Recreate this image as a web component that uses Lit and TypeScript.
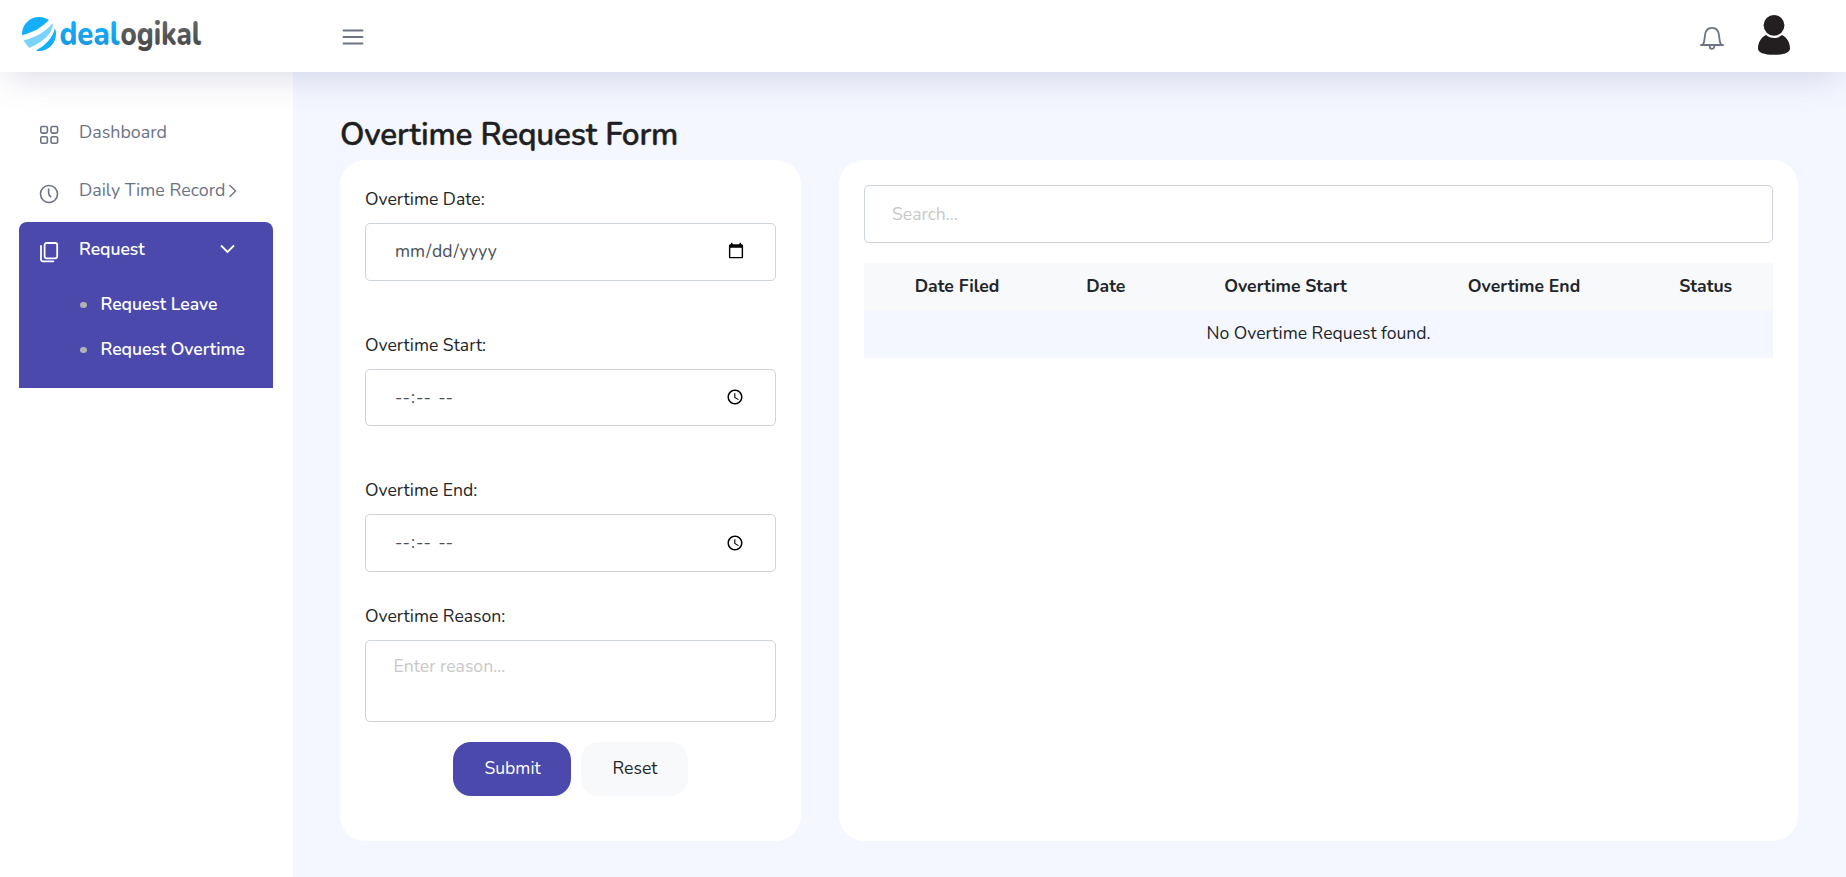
import { LitElement, html, css, svg } from "lit";
import { customElement } from "lit/decorators.js";

const gridIcon = html`<svg class="ico" width="20" height="20" viewBox="0 0 20 20">
  ${[[1.8, 1.5], [12, 1.5], [1.8, 11.7], [12, 11.7]].map(
    ([x, y]) => svg`<rect x=${x} y=${y} width="6.6" height="6.6" rx="1.6"></rect>`
  )}
</svg>`;

const clockIcon = html`<svg class="ico" width="20" height="20" viewBox="0 0 20 20">
  <circle cx="10" cy="10" r="8.5"></circle>
  <path d="M9.6 4.6v4.2c0 2 .9 3.2 2.6 4.2"></path>
</svg>`;

const copyIcon = html`<svg class="ico copy" width="20" height="22" viewBox="0 0 20 22">
  <rect x="5.6" y="2" width="12.6" height="15.3" rx="2"></rect>
  <path d="M2 4.8v13.4c0 1.3.8 2.1 2.1 2.1h10.2"></path>
</svg>`;

@customElement("app-header")
class AppHeader extends LitElement {
  static styles = css`
    :host { display: block; }
    .bar {
      height: 72px; box-sizing: border-box; display: flex; align-items: center;
      background: #fff; padding: 0 55px 0 22px;
      box-shadow: 0 10px 36px -8px rgba(100, 102, 155, .28);
    }
    .brand { width: 320px; display: flex; align-items: center; }
    .menu { display: block; margin-top: 2px; }
    .right { margin-left: auto; display: flex; align-items: center; gap: 32px; }
    .word { font: 800 33.5px "Nunito", sans-serif; }
    svg { display: block; }
    .bell { margin-top: 3px; }
    .avatar { margin-bottom: 2px; }
  `;
  render() {
    return html`<header class="bar">
      <div class="brand">
        <svg width="200" height="60" viewBox="0 0 200 60">
          <defs>
            <linearGradient id="blue" x1="0" y1="0" x2="0" y2="1">
              <stop offset=".3" stop-color="#14aefa"></stop>
              <stop offset=".85" stop-color="#1a93de"></stop>
            </linearGradient>
            <linearGradient id="gray" x1="0" y1="0" x2="0" y2="1">
              <stop offset=".3" stop-color="#626366"></stop>
              <stop offset=".85" stop-color="#464646"></stop>
            </linearGradient>
            <clipPath id="globe"><circle cx="17" cy="28" r="17"></circle></clipPath>
          </defs>
          <g clip-path="url(#globe)">
            <path fill="#14aefa" d="M-1 29.5C11 26.5 20 21.5 27.5 13.5L24 8H-1z"></path>
            <path fill="#7bd3fc" d="M1.5 34.5C15 31 25 24.5 31 16.5C31 28 21 36 7 42z"></path>
            <path fill="#14aefa" d="M14 44.5C24 39 31.5 31 33 21.5L36 25V46H14z"></path>
          </g>
          <text class="word" x="37.5" y="38.5" textLength="60" lengthAdjust="spacingAndGlyphs" fill="url(#blue)">deal</text>
          <text class="word" x="98.5" y="38.5" textLength="80.5" lengthAdjust="spacingAndGlyphs" fill="url(#gray)">ogikal</text>
        </svg>
      </div>
      <svg class="menu" width="22" height="18" viewBox="0 0 22 18" stroke="#6c7383" stroke-width="1.9" stroke-linecap="round">
        <path d="M1.5 2.5h19M1.5 9h19M1.5 15.5h19"></path>
      </svg>
      <div class="right">
        <svg class="bell" width="26" height="26" viewBox="0 0 26 26" fill="none" stroke="#6c7383" stroke-width="1.8">
          <path d="M1.3 20H24.7M4 19.7C5.5 17 5.6 14.5 5.8 11.5C6.1 6.3 8.6 2.9 13 2.9S19.9 6.3 20.2 11.5C20.4 14.5 20.5 17 22 19.7"></path>
          <path d="M10.7 20.2v1.3a2.3 2.3 0 0 0 4.6 0v-1.3"></path>
        </svg>
        <svg class="avatar" width="34" height="44" viewBox="0 0 34 44" fill="#231f20">
          <circle cx="17" cy="12.3" r="10.4"></circle>
          <path d="M9 22C13.5 25.9 20.5 25.9 25 22C30 24.5 33 29.5 33 35.5C33 39.5 27 41.8 17 41.8S1 39.5 1 35.5C1 29.5 4 24.5 9 22z"></path>
        </svg>
      </div>
    </header>`;
  }
}

@customElement("app-sidebar")
class AppSidebar extends LitElement {
  static styles = css`
    :host { display: block; }
    .nav {
      height: 100%; box-sizing: border-box; padding: 33px 20px 0 19px; background: #fff;
      display: flex; flex-direction: column; gap: 4.5px; color: #6c7383;
      font: 400 17.85px/24px "Nunito", sans-serif;
    }
    .row { height: 54px; display: flex; align-items: center; padding-left: 20px; white-space: nowrap; }
    .row span { margin-bottom: 1px; }
    .ico { fill: none; stroke: currentColor; stroke-width: 1.6; margin: 6px 20px 0 0; flex: none; }
    .ico.copy { stroke-width: 1.8; stroke-linecap: round; }
    .chev { fill: none; stroke: currentColor; stroke-width: 1.4; }
    .right { margin: 0 0 0 3px; }
    .down { margin: 0 0 0 75px; stroke-width: 1.8; }
    .group {
      height: 166px; background: #4b49ac; color: #fff; border-radius: 8px 8px 0 0;
      font-weight: 600; font-size: 17.6px; letter-spacing: -0.04px;
    }
    ul { list-style: none; margin: 5.5px 0 0; padding: 0 0 0 61px; }
    li { height: 45px; display: flex; align-items: center; gap: 13.5px; white-space: nowrap; }
    .dot { width: 7px; height: 6.4px; border-radius: 50%; background: #b2b2b2; margin-top: 2px; }
  `;
  render() {
    return html`<nav class="nav">
      <div class="row">${gridIcon}<span>Dashboard</span></div>
      <div class="row">${clockIcon}<span>Daily Time Record</span>
        <svg class="chev right" width="9" height="14" viewBox="0 0 9 14"><path d="M1.5 1l6 6-6 6"></path></svg>
      </div>
      <div class="group">
        <div class="row">${copyIcon}<span>Request</span>
          <svg class="chev down" width="15" height="10" viewBox="0 0 15 10"><path d="M1 1.5l6.5 6.5L14 1.5"></path></svg>
        </div>
        <ul>${["Request Leave", "Request Overtime"].map((t) => html`<li><i class="dot"></i>${t}</li>`)}</ul>
      </div>
    </nav>`;
  }
}

@customElement("overtime-form")
class OvertimeForm extends LitElement {
  static styles = css`
    :host { display: block; }
    form { display: flex; flex-direction: column; font: 400 17.6px/28px "Nunito", sans-serif; color: #212529; }
    label { display: block; height: 28px; margin-bottom: 10px; }
    input, textarea {
      display: block; box-sizing: border-box; width: 100%; height: 58px; margin: 0 0 50px;
      padding: 13px 27px 15px 28px; border: 1px solid #ced4da; border-radius: 5px; outline: none; resize: none;
      background: #fff; font: inherit; color: #495057;
    }
    #s { height: 57px; }
    input[type="date"] { padding-right: 28px; }
    input[type="time"] { padding-right: 28px; }
    input::-webkit-datetime-edit-ampm-field { margin-left: 3px; }
    input[type="time"]::-webkit-calendar-picker-indicator { margin-top: 2px; }
    .last { margin-bottom: 30px; }
    textarea { height: 82px; margin-bottom: 20px; padding: 11px 27.5px; overflow: hidden; }
    textarea::placeholder { color: #c9c8c8; }
    .actions { display: flex; justify-content: center; gap: 10px; }
    button {
      height: 54px; padding: 0 0 2px 1px; border: 0; border-radius: 18px; font: 400 17.6px/24px "Nunito", sans-serif;
      width: 107px; background: #f8f9fa; color: #212529;
    }
    .primary { width: 118px; background: #4b49ac; color: #fff; }
  `;
  render() {
    return html`<form>
      <label for="d">Overtime Date:</label><input id="d" type="date" />
      <label for="s">Overtime Start:</label><input id="s" type="time" />
      <label for="e">Overtime End:</label><input id="e" class="last" type="time" />
      <label for="r">Overtime Reason:</label><textarea id="r" placeholder="Enter reason..."></textarea>
      <div class="actions">
        <button class="primary" type="button">Submit</button>
        <button type="reset">Reset</button>
      </div>
    </form>`;
  }
}

@customElement("overtime-table")
class OvertimeTable extends LitElement {
  static styles = css`
    :host { display: block; font: 400 17.6px/24px "Nunito", sans-serif; color: #212529; }
    input {
      display: block; box-sizing: border-box; width: 100%; height: 58px; margin: 0 0 20px; padding: 14px 27px;
      border: 1px solid #ced4da; border-radius: 5px; background: #fff; font: inherit; outline: none;
    }
    input::placeholder { color: #c9c8c8; }
    .head, .empty { display: grid; align-items: center; text-align: center; box-sizing: border-box; padding-bottom: 2px; }
    .head { grid-template-columns: 186px 111.5px 248px 229px 1fr; height: 47px; background: #f8f9fa; font-weight: 700; }
    .empty { height: 48px; background: #f4f7ff; }
  `;
  render() {
    return html`<input placeholder="Search..." />
      <div class="head">
        ${["Date Filed", "Date", "Overtime Start", "Overtime End", "Status"].map((t) => html`<span>${t}</span>`)}
      </div>
      <div class="empty">No Overtime Request found.</div>`;
  }
}

@customElement("app-root")
class AppRoot extends LitElement {
  static styles = css`
    :host { display: flex; flex-direction: column; height: 877px; overflow: hidden; background: #f4f7ff; }
    app-header { position: relative; z-index: 1; }
    .body { flex: 1; display: flex; min-height: 0; }
    app-sidebar { width: 293px; flex: none; }
    main { flex: 1; padding: 43px 48px 36px 47px; display: flex; flex-direction: column; }
    h1 {
      margin: 0 0 5px; font: 600 31.5px/40px "Nunito", sans-serif; letter-spacing: -0.18px;
      color: #1f1f1f; -webkit-text-stroke: .4px #1f1f1f;
    }
    .cards { flex: 1; display: grid; grid-template-columns: 461px 1fr; gap: 38px; }
    .card { background: #fff; border-radius: 25px; padding: 25px; }
  `;
  render() {
    return html`<app-header></app-header>
      <div class="body">
        <app-sidebar></app-sidebar>
        <main>
          <h1>Overtime Request Form</h1>
          <div class="cards">
            <section class="card"><overtime-form></overtime-form></section>
            <section class="card"><overtime-table></overtime-table></section>
          </div>
        </main>
      </div>`;
  }
}
